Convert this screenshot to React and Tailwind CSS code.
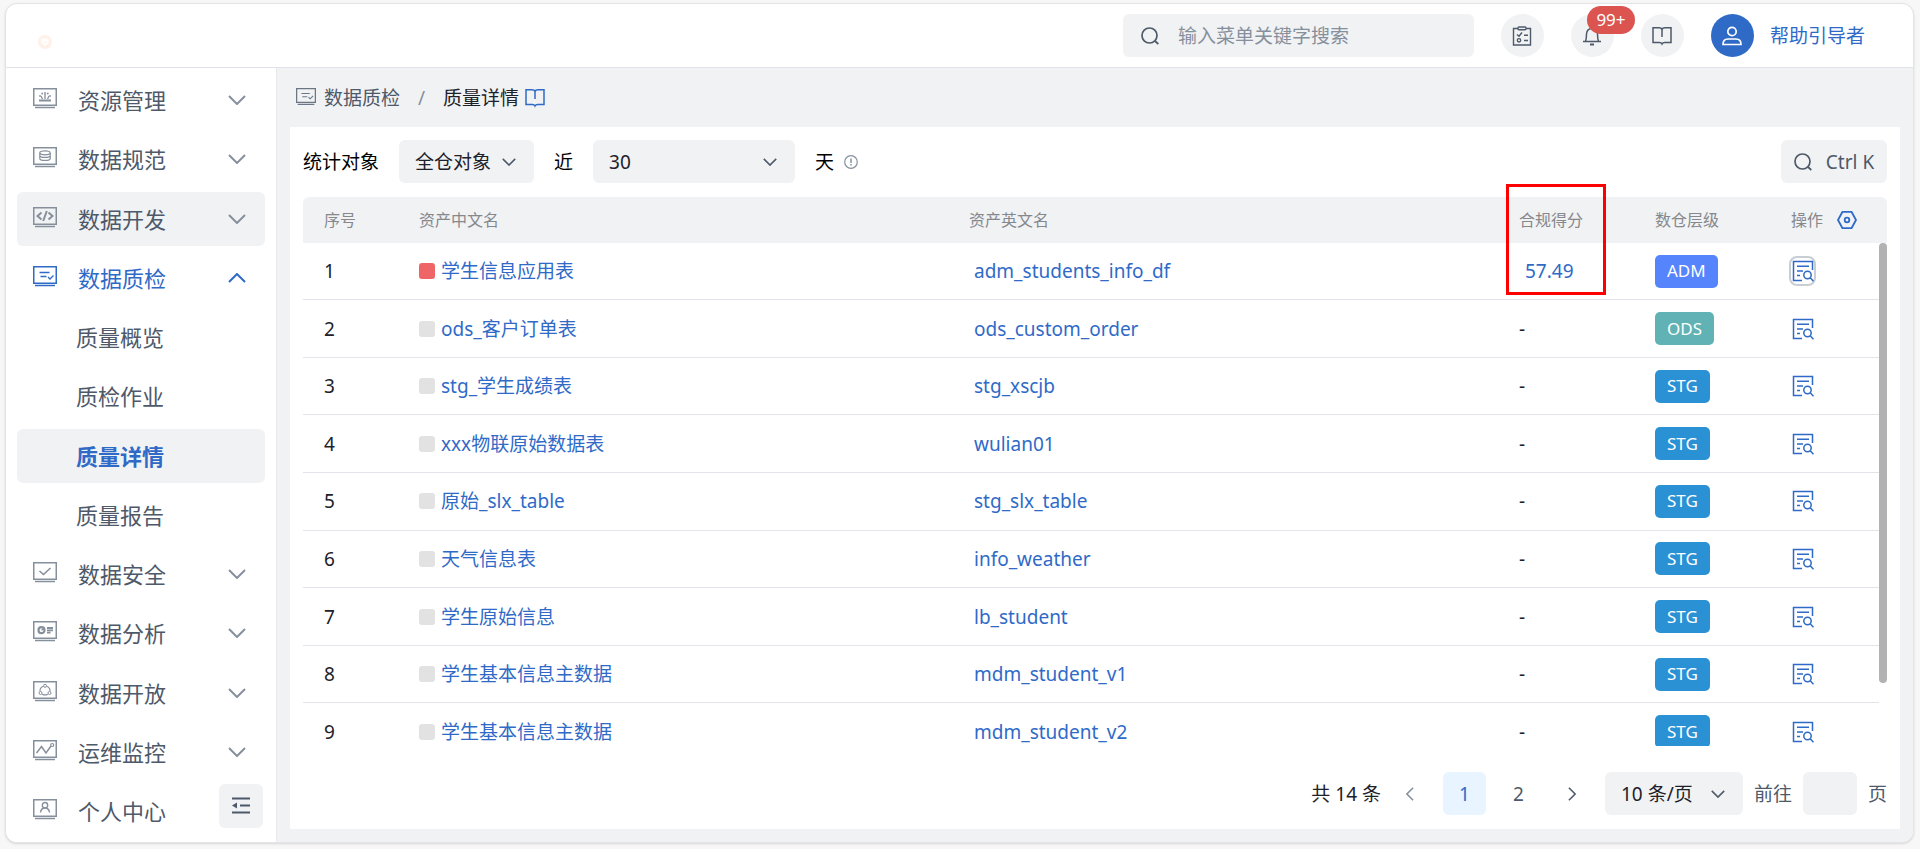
import { useState } from "react";

const menu = [
  { name: "资源管理", icon: "resource" },
  { name: "数据规范", icon: "standard" },
  { name: "数据开发", icon: "code", hovered: true },
  {
    name: "数据质检",
    icon: "quality",
    open: true,
    children: ["质量概览", "质检作业", "质量详情", "质量报告"],
  },
  { name: "数据安全", icon: "security" },
  { name: "数据分析", icon: "analysis" },
  { name: "数据开放", icon: "share" },
  { name: "运维监控", icon: "monitor" },
  { name: "个人中心", icon: "user", leaf: true },
];

const rows = [
  { id: 1, name: "学生信息应用表", code: "adm_students_info_df", score: "57.49", level: "ADM" },
  { id: 2, name: "ods_客户订单表", code: "ods_custom_order", level: "ODS" },
  { id: 3, name: "stg_学生成绩表", code: "stg_xscjb", level: "STG" },
  { id: 4, name: "xxx物联原始数据表", code: "wulian01", level: "STG" },
  { id: 5, name: "原始_slx_table", code: "stg_slx_table", level: "STG" },
  { id: 6, name: "天气信息表", code: "info_weather", level: "STG" },
  { id: 7, name: "学生原始信息", code: "lb_student", level: "STG" },
  { id: 8, name: "学生基本信息主数据", code: "mdm_student_v1", level: "STG" },
  { id: 9, name: "学生基本信息主数据", code: "mdm_student_v2", level: "STG" },
];

const levelColors = {
  ADM: "bg-[#5584fd]",
  ODS: "bg-[#61b2b5]",
  STG: "bg-[#2b91d5]",
};

const glyphs = {
  resource: (
    <>
      <path d="M6 12.5h12" strokeWidth="2.2" />
      <path d="M9.5 11 8 8M12 11V5.5M14.5 11 16 8" strokeWidth="1.3" />
      <path d="M7 8h.01M9.2 5.5h.01M12 5h.01M14.8 5.5h.01M17 8h.01" strokeWidth="1.8" strokeLinecap="round" />
    </>
  ),
  standard: (
    <>
      <ellipse cx="12" cy="5.8" rx="5.2" ry="2" strokeWidth="1.2" />
      <path d="M6.8 6v2.4c0 1.2 2.3 2 5.2 2s5.2-.8 5.2-2V6" strokeWidth="1.2" />
      <path d="M6.8 9v2.4c0 1.2 2.3 2 5.2 2s5.2-.8 5.2-2V9" strokeWidth="1.2" />
    </>
  ),
  code: <path d="M8.5 5.5l-4 3.5 4 3.5M15.5 5.5l4 3.5-4 3.5M13.8 4l-3.6 10" strokeWidth="2" />,
  quality: <path d="M6.500 6.5h10M7.5 10.5h6M15 11l2 2 3.5-3.5" strokeWidth="1.3" />,
  security: <path d="M6.5 9l4 3.5 7-6.500" strokeWidth="1.6" />,
  analysis: (
    <>
      <circle cx="8.5" cy="9.2" r="3" strokeWidth="2.2" />
      <path d="M8.5 9.2l3-2.7" strokeWidth="1.4" />
      <path d="M14 7h6M14 9.3h6M14 11.600h3.500" strokeWidth="1.8" />
    </>
  ),
  share: (
    <>
      <circle cx="12" cy="4.800" r="1.5" />
      <circle cx="7.5" cy="12" r="1.5" />
      <circle cx="16.5" cy="12" r="1.5" />
      <path d="M10.3 5.2C8 6 6.8 8 7 10.3M13.7 5.2c2.300.8 3.500 2.800 3.300 5.100M9.2 13.2c1.800 1 3.800 1 5.600 0" strokeWidth="1.2" />
    </>
  ),
  monitor: (
    <>
      <path d="M3.5 13l5-6.500 4.500 6.500 5-7" strokeWidth="1.5" />
      <circle cx="19.2" cy="5" r="1.5" strokeWidth="1.2" />
    </>
  ),
  user: (
    <>
      <circle cx="12" cy="6.2" r="2.7" strokeWidth="1.4" />
      <path d="M7.5 13.5c.4-3 2-4.500 4.500-4.500s4.100 1.500 4.500 4.500" strokeWidth="1.4" />
    </>
  ),
};

function ScreenIcon({ kind, className }) {
  return (
    <svg viewBox="0 0 24 24" fill="none" stroke="currentColor" className={className} aria-hidden="true">
      <rect x="0.75" y="0.75" width="22.5" height="16.5" strokeWidth="1.5" />
      <path d="M2 19.5h20" strokeWidth="1.5" />
      {glyphs[kind]}
    </svg>
  );
}

function Chevron({ className }) {
  return (
    <svg viewBox="0 0 18 10" fill="none" stroke="currentColor" strokeWidth="2" className={className} aria-hidden="true">
      <path d="M1 1l8 8 8-8" />
    </svg>
  );
}

function SearchIcon({ className }) {
  return (
    <svg viewBox="0 0 18 18" fill="none" stroke="currentColor" strokeWidth="1.7" className={className} aria-hidden="true">
      <circle cx="8.5" cy="8.5" r="7.5" />
      <path d="M14 14l3.300 3" />
    </svg>
  );
}

function BookIcon({ className }) {
  return (
    <svg viewBox="0 0 20 20" fill="none" stroke="currentColor" strokeWidth="1.5" className={className} aria-hidden="true">
      <path d="M10 11V3.500C9.500 2 8.500 1.700 7 1.700H1v14.800h6.500c1.200 0 2 .5 2.500 1.500.5-1 1.300-1.500 2.500-1.500H19V1.700h-6c-1.500 0-2.500.3-3 1.800" />
    </svg>
  );
}

function DetailIcon() {
  return (
    <svg viewBox="0 0 22 22" fill="none" stroke="currentColor" strokeWidth="1.5" className="size-[22px]" aria-hidden="true">
      <path d="M10 20.500H1.500V1.500h19V10M5 6.300h12M5 11h6M5 15.500h3" />
      <circle cx="15.500" cy="15" r="3.700" />
      <path d="M18.200 17.800l3.300 3.500" />
    </svg>
  );
}

function Header() {
  return (
    <header className="flex h-16 shrink-0 items-center border-b border-[#e1e2e8] pr-12 pl-8">
      <svg viewBox="0 0 14 14" className="mt-3 size-3.5" aria-hidden="true">
        <circle cx="7" cy="7" r="7" fill="#fff0e8" />
        <path d="M3.500 4 7 3.300l3.500.7v4L7 11 3.500 8z" fill="#fff" />
        <path d="M5.300 6.500 7 8l2-2" fill="none" stroke="#fff0e8" />
      </svg>
      <div className="ml-auto flex items-center gap-[27px]">
        <label className="flex h-[43px] w-[351px] items-center gap-[19px] rounded-md bg-[#f1f2f4] px-[18px] text-[#4e5969]">
          <SearchIcon className="size-[18px] shrink-0" />
          <input
            type="text"
            aria-label="菜单搜索"
            placeholder="输入菜单关键字搜索"
            className="w-full bg-transparent outline-none placeholder:text-[#86909c]"
          />
        </label>
        <button aria-label="任务" className="flex size-[43px] items-center justify-center rounded-full bg-[#f1f2f4] text-[#4e5969]">
          <svg viewBox="0 0 20 20" fill="none" stroke="currentColor" strokeWidth="1.4" className="size-5">
            <path d="M6 2.500H1.500v16.500h17V2.500H14" />
            <rect x="6" y="1" width="8" height="2.800" rx="1" />
            <path d="M5 8.500l2 1.700 3-3.700M12 9.300h4M12 14.500h4" />
            <circle cx="7" cy="14.300" r="1.700" />
          </svg>
        </button>
        <button aria-label="消息" className="relative flex size-[43px] items-center justify-center rounded-full bg-[#f1f2f4] text-[#4e5969]">
          <svg viewBox="0 0 20 20" fill="none" stroke="currentColor" strokeWidth="1.5" className="size-5">
            <path d="M1 15.500h18M3.500 15.300C4.500 13 4.300 11 4.500 8c.3-3.500 2.500-5.500 5.500-5.500s5.200 2 5.500 5.500c.2 3 0 5 1 7.300M10 2.500V1" />
            <path d="M8 18.500h4" strokeWidth="2" />
          </svg>
          <span className="absolute -top-2 left-4 flex h-7 w-12 items-center justify-center rounded-full bg-[#db5450] text-[17px] text-white">
            99+
          </span>
        </button>
        <button aria-label="文档" className="flex size-[43px] items-center justify-center rounded-full bg-[#f1f2f4] text-[#4e5969]">
          <BookIcon className="size-5" />
        </button>
        <a href="#profile" className="flex items-center gap-4 text-[#2f6ac7]">
          <span className="flex size-[43px] items-center justify-center rounded-full bg-[#2f6ac7] text-white">
            <svg viewBox="0 0 20 20" fill="none" stroke="currentColor" strokeWidth="1.7" className="size-5">
              <circle cx="10" cy="5.500" r="4.200" />
              <path d="M1 18.500c0-3.500 2-5.500 5-5.500h8c3 0 5 2 5 5.500z" />
            </svg>
          </span>
          帮助引导者
        </a>
      </div>
    </header>
  );
}

function Sidebar({ active, onSelect }) {
  return (
    <aside className="relative flex w-[271px] shrink-0 flex-col border-r border-[#e8eaee] bg-white">
      <nav className="flex flex-1 flex-col justify-between px-[11px] pt-[5px] pb-1 text-[22px] leading-7">
        {menu.flatMap((item) => [
          <button
            key={item.name}
            className={`flex h-[54px] items-center rounded-md pr-[19px] pl-4 ${
              item.open ? "text-[#2f6ac7]" : "text-[#4e5969]"
            } ${item.hovered ? "bg-[#f1f2f4]" : ""}`}
          >
            <ScreenIcon kind={item.icon} className={`mr-[21px] size-6 ${item.open ? "" : "text-[#86909c]"}`} />
            {item.name}
            {!item.leaf && (
              <Chevron className={`ml-auto h-2.5 w-[18px] ${item.open ? "rotate-180" : "text-[#86909c]"}`} />
            )}
          </button>,
          ...(item.children || []).map((child) => (
            <button
              key={child}
              onClick={() => onSelect(child)}
              className={`flex h-[54px] items-center rounded-md pl-[59px] ${
                child === active ? "bg-[#f1f2f4] font-bold text-[#2f6ac7]" : "text-[#4e5969]"
              }`}
            >
              {child}
            </button>
          )),
        ])}
      </nav>
      <button
        aria-label="收起菜单"
        className="absolute right-[13px] bottom-3.5 flex size-11 items-center justify-center rounded-md bg-[#f1f2f4] text-[#4e5969]"
      >
        <svg viewBox="0 0 20 18" fill="none" stroke="currentColor" strokeWidth="2" className="h-[18px] w-5">
          <path d="M1 1.500h18M9 8.500h10M1 15.500h18" />
          <path d="M6 5.500v6L1 8.500z" fill="currentColor" stroke="none" />
        </svg>
      </button>
    </aside>
  );
}

function SelectBox({ label, value, className }) {
  return (
    <div className={`relative h-[43px] ${className}`}>
      <select
        aria-label={label}
        className="size-full appearance-none rounded-md bg-[#f1f2f4] pr-10 pl-4 text-[#1d2129] outline-none"
      >
        <option>{value}</option>
      </select>
      <Chevron className="pointer-events-none absolute top-[18px] right-[18px] h-2 w-3.5 text-[#4e5969]" />
    </div>
  );
}

function Columns() {
  return (
    <colgroup>
      <col className="w-[100px]" />
      <col />
      <col />
      <col className="w-[136px]" />
      <col className="w-[136px]" />
      <col className="w-[104px]" />
    </colgroup>
  );
}

function AssetTable() {
  return (
    <div className="flex min-h-0 flex-1 flex-col">
      <div className="rounded-t-md bg-[#f1f2f4] pr-2">
        <table className="w-full table-fixed text-left text-base text-[#86888c]">
          <Columns />
          <thead>
            <tr className="h-[46px]">
              <th className="pl-[21px] font-normal">序号</th>
              <th className="pl-4 font-normal">资产中文名</th>
              <th className="pl-4 font-normal">资产英文名</th>
              <th className="relative pl-4 font-normal">
                合规得分
                <span className="pointer-events-none absolute -top-[13px] left-[3px] z-10 h-[111px] w-[100px] border-3 border-[#fe0000]" />
              </th>
              <th className="pl-4 font-normal">数仓层级</th>
              <th className="pl-4 font-normal">
                <div className="flex items-center gap-3.5">
                  操作
                  <button aria-label="列设置" className="text-[#2f6ac7]">
                    <svg viewBox="0 0 20 20" fill="none" stroke="currentColor" strokeWidth="1.8" className="size-5">
                      <path d="M5.500 1.800h9L19 10l-4.500 8.200h-9L1 10z" strokeLinejoin="round" />
                      <circle cx="10" cy="10" r="2.300" />
                    </svg>
                  </button>
                </div>
              </th>
            </tr>
          </thead>
        </table>
      </div>

      <div className="relative min-h-0 flex-1 overflow-hidden pr-2">
        <table className="h-[518px] w-full table-fixed text-left">
          <Columns />
          <tbody>
            {rows.map((row) => (
              <tr key={row.id} className="border-b border-[#e3e4e9]">
                <td className="pl-[21px] text-[#1d2129]">{row.id}</td>
                <td className="pl-4">
                  <div className="flex items-center gap-1.5">
                    <span className={`size-4 rounded-[3px] ${row.score ? "bg-[#ef6567]" : "bg-[#e2e2e2]"}`} />
                    <a href="#asset" className="text-[#2f6ac7]">{row.name}</a>
                  </div>
                </td>
                <td className="pl-[21px]">
                  <a href="#asset" className="text-[#2f6ac7]">{row.code}</a>
                </td>
                <td className="pl-4 text-[#1d2129]">
                  {row.score ? <a href="#score" className="pl-1.5 text-[#2f6ac7]">{row.score}</a> : "-"}
                </td>
                <td className="pl-4">
                  <span className={`inline-flex h-[33px] items-center rounded-[5px] px-3 align-middle text-[17px] text-white ${levelColors[row.level]}`}>
                    {row.level}
                  </span>
                </td>
                <td className="pl-3.5">
                  <button
                    aria-label="查看详情"
                    className={`flex h-[30px] w-[27px] items-center justify-center rounded-lg text-[#2f6ac7] ${
                      row.id === 1 ? "border-2 border-[#c9cdd4]" : ""
                    }`}
                  >
                    <DetailIcon />
                  </button>
                </td>
              </tr>
            ))}
          </tbody>
        </table>
        <div className="absolute top-0 right-0 h-[440px] w-2 rounded-full bg-[#b2b2b2]" />
      </div>
    </div>
  );
}

function Pagination() {
  const [page, setPage] = useState(1);
  const [jump, setJump] = useState("");

  return (
    <div className="mt-[26px] flex shrink-0 items-center justify-end text-[#4e5969]">
      <span className="text-[#1d2129]">共 14 条</span>
      <button aria-label="上一页" onClick={() => setPage(1)} className="ml-2 flex size-[43px] items-center justify-center text-[#86909c]">
        <Chevron className="h-2 w-3.5 rotate-90" />
      </button>
      {[1, 2].map((n) => (
        <button
          key={n}
          onClick={() => setPage(n)}
          className={`ml-[11px] size-[43px] rounded-md ${n === page ? "bg-[#e8f4ff] text-[#2f6ac7]" : ""}`}
        >
          {n}
        </button>
      ))}
      <button aria-label="下一页" onClick={() => setPage(2)} className="ml-[11px] flex size-[43px] items-center justify-center">
        <Chevron className="h-2 w-3.5 -rotate-90" />
      </button>
      <SelectBox label="每页条数" value="10 条/页" className="ml-[11px] w-[138px]" />
      <label className="ml-[11px] flex items-center gap-[11px]">
        前往
        <input
          type="text"
          value={jump}
          onChange={(e) => setJump(e.target.value)}
          className="h-[43px] w-[54px] rounded-md bg-[#f1f2f4] text-center outline-none"
        />
        页
      </label>
    </div>
  );
}

export default function App() {
  const [active, setActive] = useState("质量详情");

  return (
    <div className="h-screen bg-[#f7f7f7] pt-[3px] pr-1.5 pb-1.5 pl-[5px] font-['Noto_Sans','Noto_Sans_CJK_SC',sans-serif] text-[19px] leading-6">
      <div className="flex h-full flex-col overflow-hidden rounded-xl border border-[#e4e4e6] bg-white shadow-sm">
        <Header />
        <div className="flex min-h-0 flex-1">
          <Sidebar active={active} onSelect={setActive} />
          <main className="flex min-w-0 flex-1 flex-col bg-[#f1f2f4] px-[13px] pb-[13px]">
            {/* Breadcrumb */}
            <div className="flex h-[59px] shrink-0 items-center pl-1.5">
              <ScreenIcon kind="quality" className="mr-2 size-5 text-[#6b7785]" />
              <a href="#quality" className="text-[#4e5969]">数据质检</a>
              <span className="w-[43px] text-center text-[#86909c]">/</span>
              <span className="text-[#1d2129]">{active}</span>
              <BookIcon className="ml-1.5 size-5 text-[#2f6ac7]" />
            </div>

            <section className="flex min-h-0 flex-1 flex-col bg-white px-[13px] pt-[13px] pb-3.5">
              {/* Filters */}
              <div className="mb-3.5 flex shrink-0 items-center gap-5 text-black">
                <span>统计对象</span>
                <SelectBox label="统计对象" value="全仓对象" className="w-[135px]" />
                <span>近</span>
                <SelectBox label="天数" value="30" className="w-[202px]" />
                <span className="flex items-center gap-2.5">
                  天
                  <svg viewBox="0 0 14 14" fill="none" stroke="currentColor" className="size-3.5 text-[#86909c]" aria-hidden="true">
                    <circle cx="7" cy="7" r="6.300" strokeWidth="1.2" />
                    <path d="M7 3.500V8M7 9v1.500" strokeWidth="1.5" />
                  </svg>
                </span>
                <button className="ml-auto flex h-[43px] w-[106px] items-center justify-center gap-3.5 rounded-md bg-[#f1f2f4] text-[#4e5969]">
                  <SearchIcon className="size-[18px]" />
                  Ctrl K
                </button>
              </div>

              <AssetTable />
              <Pagination />
            </section>
          </main>
        </div>
      </div>
    </div>
  );
}
